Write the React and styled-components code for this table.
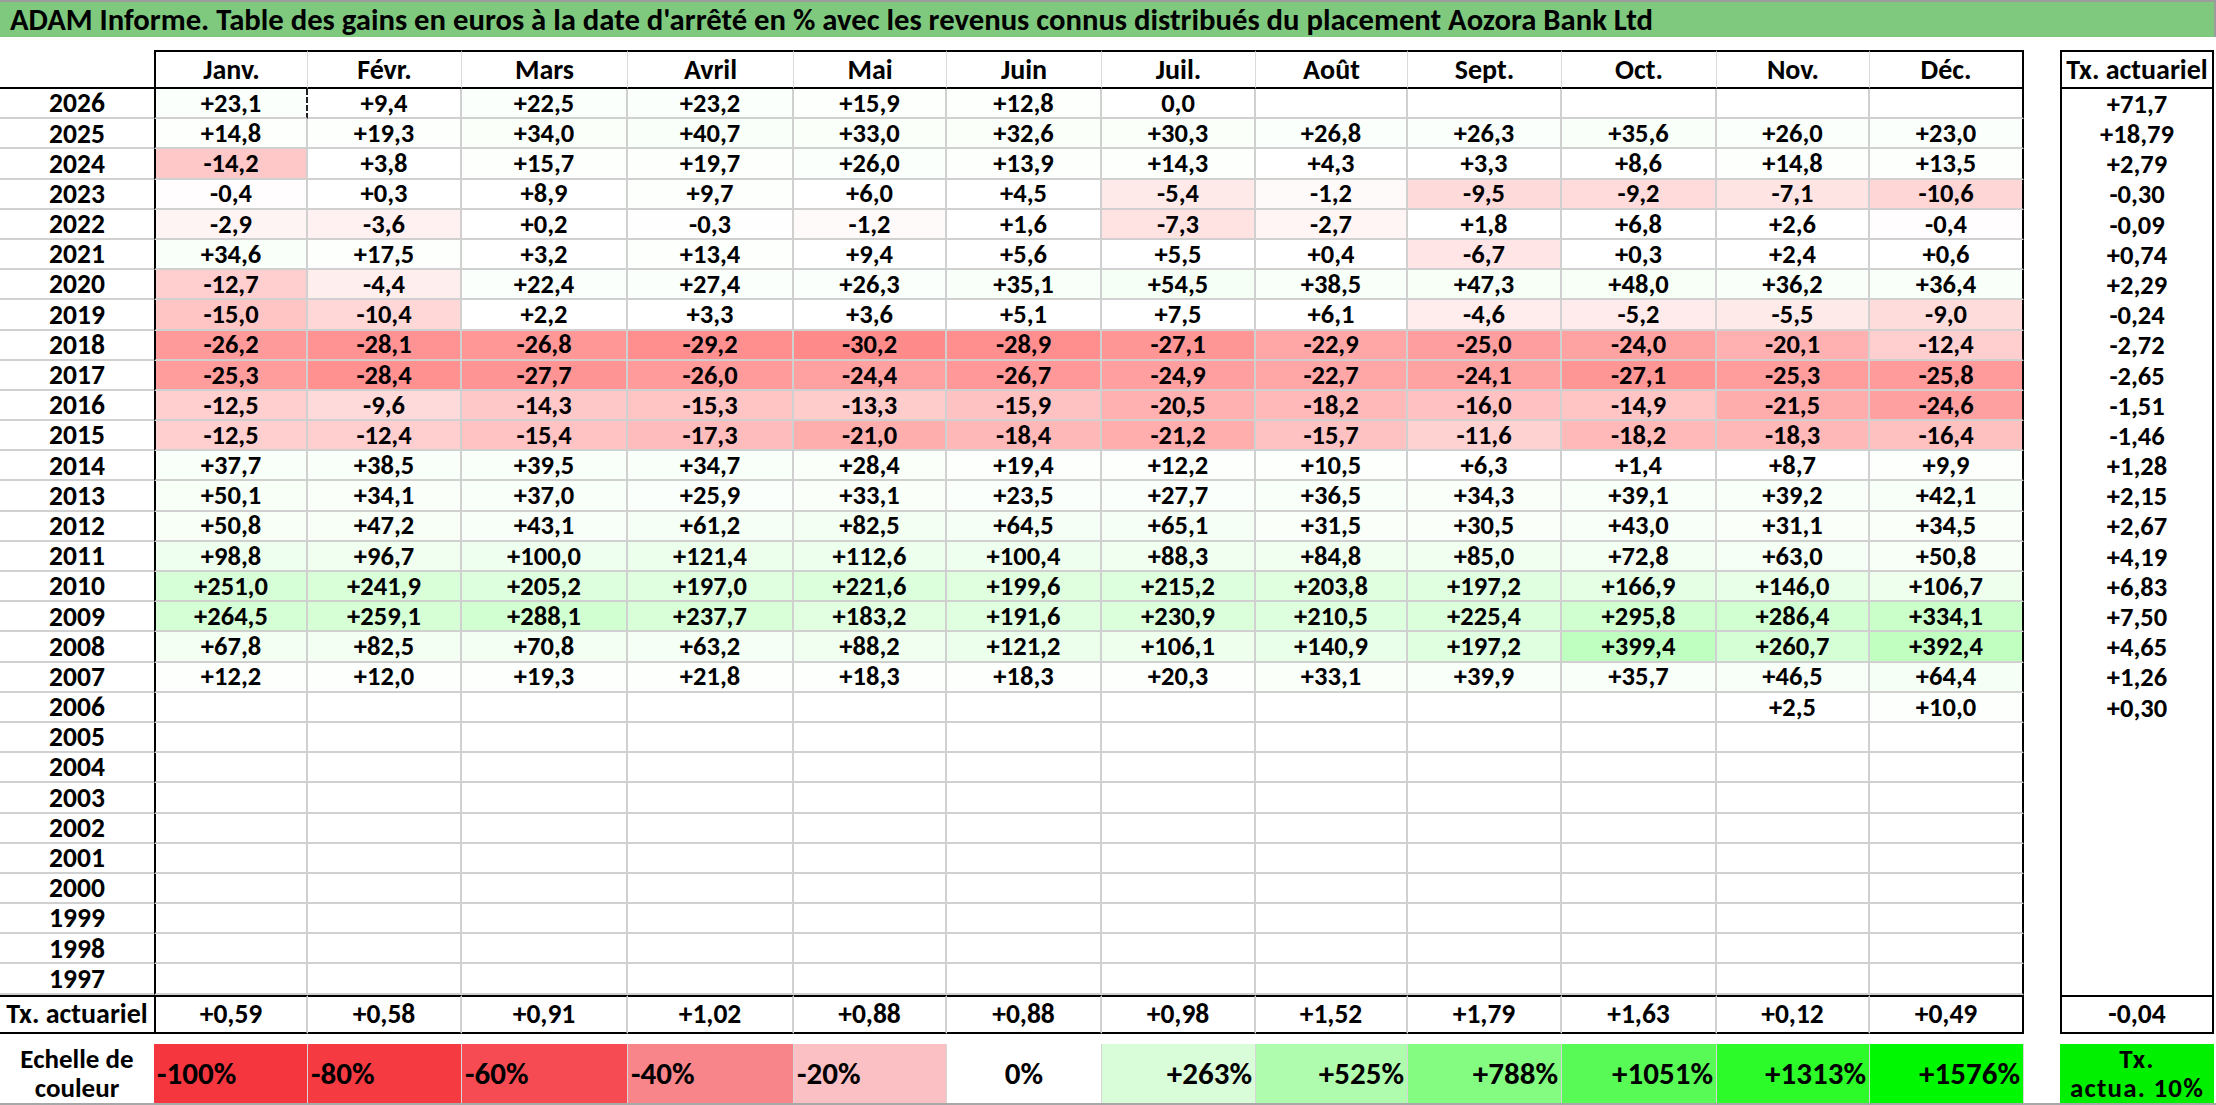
import React from "react";
import styled, { createGlobalStyle } from "styled-components";

const GlobalStyle = createGlobalStyle`
	html, body {
		margin: 0;
		padding: 0;
		background: #fff;
	}
	body {
		font-family: Carlito, Lato, "Liberation Sans", sans-serif;
		color: #000;
	}
`;

const COLUMNS = "154px 154px 154px 166px 166px 153px 155px 154px 152px 154px 155px 153px 154px 36px 154px 2px";
const GRID = "#d0d0d0";
const INK = "#000";

const MONTHS = ["Janv.", "Févr.", "Mars", "Avril", "Mai", "Juin", "Juil.", "Août", "Sept.", "Oct.", "Nov.", "Déc."];

const YEARS = [
	["2026", ["+23,1", "+9,4", "+22,5", "+23,2", "+15,9", "+12,8", "0,0", "", "", "", "", ""], "+71,7"],
	["2025", ["+14,8", "+19,3", "+34,0", "+40,7", "+33,0", "+32,6", "+30,3", "+26,8", "+26,3", "+35,6", "+26,0", "+23,0"], "+18,79"],
	["2024", ["-14,2", "+3,8", "+15,7", "+19,7", "+26,0", "+13,9", "+14,3", "+4,3", "+3,3", "+8,6", "+14,8", "+13,5"], "+2,79"],
	["2023", ["-0,4", "+0,3", "+8,9", "+9,7", "+6,0", "+4,5", "-5,4", "-1,2", "-9,5", "-9,2", "-7,1", "-10,6"], "-0,30"],
	["2022", ["-2,9", "-3,6", "+0,2", "-0,3", "-1,2", "+1,6", "-7,3", "-2,7", "+1,8", "+6,8", "+2,6", "-0,4"], "-0,09"],
	["2021", ["+34,6", "+17,5", "+3,2", "+13,4", "+9,4", "+5,6", "+5,5", "+0,4", "-6,7", "+0,3", "+2,4", "+0,6"], "+0,74"],
	["2020", ["-12,7", "-4,4", "+22,4", "+27,4", "+26,3", "+35,1", "+54,5", "+38,5", "+47,3", "+48,0", "+36,2", "+36,4"], "+2,29"],
	["2019", ["-15,0", "-10,4", "+2,2", "+3,3", "+3,6", "+5,1", "+7,5", "+6,1", "-4,6", "-5,2", "-5,5", "-9,0"], "-0,24"],
	["2018", ["-26,2", "-28,1", "-26,8", "-29,2", "-30,2", "-28,9", "-27,1", "-22,9", "-25,0", "-24,0", "-20,1", "-12,4"], "-2,72"],
	["2017", ["-25,3", "-28,4", "-27,7", "-26,0", "-24,4", "-26,7", "-24,9", "-22,7", "-24,1", "-27,1", "-25,3", "-25,8"], "-2,65"],
	["2016", ["-12,5", "-9,6", "-14,3", "-15,3", "-13,3", "-15,9", "-20,5", "-18,2", "-16,0", "-14,9", "-21,5", "-24,6"], "-1,51"],
	["2015", ["-12,5", "-12,4", "-15,4", "-17,3", "-21,0", "-18,4", "-21,2", "-15,7", "-11,6", "-18,2", "-18,3", "-16,4"], "-1,46"],
	["2014", ["+37,7", "+38,5", "+39,5", "+34,7", "+28,4", "+19,4", "+12,2", "+10,5", "+6,3", "+1,4", "+8,7", "+9,9"], "+1,28"],
	["2013", ["+50,1", "+34,1", "+37,0", "+25,9", "+33,1", "+23,5", "+27,7", "+36,5", "+34,3", "+39,1", "+39,2", "+42,1"], "+2,15"],
	["2012", ["+50,8", "+47,2", "+43,1", "+61,2", "+82,5", "+64,5", "+65,1", "+31,5", "+30,5", "+43,0", "+31,1", "+34,5"], "+2,67"],
	["2011", ["+98,8", "+96,7", "+100,0", "+121,4", "+112,6", "+100,4", "+88,3", "+84,8", "+85,0", "+72,8", "+63,0", "+50,8"], "+4,19"],
	["2010", ["+251,0", "+241,9", "+205,2", "+197,0", "+221,6", "+199,6", "+215,2", "+203,8", "+197,2", "+166,9", "+146,0", "+106,7"], "+6,83"],
	["2009", ["+264,5", "+259,1", "+288,1", "+237,7", "+183,2", "+191,6", "+230,9", "+210,5", "+225,4", "+295,8", "+286,4", "+334,1"], "+7,50"],
	["2008", ["+67,8", "+82,5", "+70,8", "+63,2", "+88,2", "+121,2", "+106,1", "+140,9", "+197,2", "+399,4", "+260,7", "+392,4"], "+4,65"],
	["2007", ["+12,2", "+12,0", "+19,3", "+21,8", "+18,3", "+18,3", "+20,3", "+33,1", "+39,9", "+35,7", "+46,5", "+64,4"], "+1,26"],
	["2006", ["", "", "", "", "", "", "", "", "", "", "+2,5", "+10,0"], "+0,30"],
	...["2005", "2004", "2003", "2002", "2001", "2000", "1999", "1998", "1997"].map(y => [y, Array(12).fill(""), ""])
];

const TOTALS = ["+0,59", "+0,58", "+0,91", "+1,02", "+0,88", "+0,88", "+0,98", "+1,52", "+1,79", "+1,63", "+0,12", "+0,49"];

const SCALE = [
	{ label: "-100%", bg: "#f5363f", align: "flex-start" },
	{ label: "-80%", bg: "#f63a42", align: "flex-start" },
	{ label: "-60%", bg: "#f64b52", align: "flex-start" },
	{ label: "-40%", bg: "#f8858a", align: "flex-start" },
	{ label: "-20%", bg: "#fbc0c3", align: "flex-start" },
	{ label: "0%", bg: "#ffffff", align: "center" },
	{ label: "+263%", bg: "#d9fdd8", align: "flex-end" },
	{ label: "+525%", bg: "#b0fcae", align: "flex-end" },
	{ label: "+788%", bg: "#84fc81", align: "flex-end" },
	{ label: "+1051%", bg: "#58fb55", align: "flex-end" },
	{ label: "+1313%", bg: "#2cfb29", align: "flex-end" },
	{ label: "+1576%", bg: "#00f900", align: "flex-end" }
];

// couleur de fond d'une cellule selon la valeur (blanc -> rouge / blanc -> vert)
const cellColor = text => {
	if (!text) return "#fff";
	const v = parseFloat(text.replace(",", "."));
	if (v < 0) {
		const t = Math.min(1, -v / 66);
		const c = Math.round(255 * (1 - t));
		return `rgb(255, ${c}, ${c})`;
	}
	const t = Math.min(1, v / 1600);
	const c = Math.round(255 * (1 - t));
	return `rgb(${c}, 255, ${c})`;
};

const Page = styled.div`
	width: 2216px;
	height: 1105px;
	overflow: hidden;
	display: flex;
	flex-direction: column;
`;

const TitleBar = styled.div`
	height: 37px;
	box-sizing: border-box;
	display: flex;
	align-items: center;
	padding: 2px 0 0 10px;
	background: #7fc97f;
	border-top: 2px solid #9c9c9c;
	border-right: 2px solid #9c9c9c;
	font-size: 30.7px;
	line-height: 1;
	font-weight: 700;
	white-space: nowrap;
`;

const TopGap = styled.div`
	height: 13px;
	flex: none;
`;

const Row = styled.div`
	display: grid;
	grid-template-columns: ${COLUMNS};
	height: ${p => p.$height};
	flex: none;
`;

const Cell = styled.div`
	box-sizing: border-box;
	display: flex;
	align-items: center;
	justify-content: center;
	font-size: 26.5px;
	line-height: 1;
	font-weight: 700;
	white-space: nowrap;
`;

const HeadLabel = styled(Cell)`
	border-bottom: 2px solid ${INK};
`;

const HeadCell = styled(Cell)`
	font-size: 28px;
	border-top: 2px solid ${INK};
	border-bottom: 2px solid ${INK};
	border-right: ${p => (p.$last ? `2px solid ${INK}` : "1px solid #dadada")};
	border-left: ${p => (p.$first ? `2px solid ${INK}` : "none")};
`;

const TxHead = styled(Cell)`
	font-size: 28px;
	border: 2px solid ${INK};
`;

const YearLabel = styled(Cell)`
	font-size: 27.5px;
	border-bottom: 2px solid ${GRID};
`;

const YearCell = styled(Cell)`
	background: ${p => p.$bg};
	border-bottom: 2px solid ${GRID};
	border-right: ${p => (p.$last ? `2px solid ${INK}` : p.$dashed ? `2px dashed #222` : `2px solid ${GRID}`)};
	border-left: ${p => (p.$first ? `2px solid ${INK}` : "none")};
`;

const TxBody = styled(Cell)`
	border-left: 2px solid ${INK};
	border-right: 2px solid ${INK};
`;

const TotalLabel = styled(Cell)`
	border-top: 2px solid ${INK};
	border-bottom: 2px solid ${INK};
	font-size: 28px;
`;

const TotalCell = styled(Cell)`
	font-size: 27.5px;
	border-top: 2px solid ${INK};
	border-bottom: 2px solid ${INK};
	border-right: ${p => (p.$last ? `2px solid ${INK}` : `2px solid ${GRID}`)};
	border-left: ${p => (p.$first ? `2px solid ${INK}` : "none")};
`;

const TxTotal = styled(Cell)`
	font-size: 27.5px;
	border: 2px solid ${INK};
`;

const Spacer = styled.div``;

const BottomGap = styled.div`
	height: 10px;
	flex: none;
`;

const LegendRow = styled(Row)`
	border-bottom: 2px solid #a8a8a8;
	box-sizing: border-box;
`;

const LegendLabel = styled(Cell)`
	flex-direction: column;
	line-height: 29px;
	font-size: 27px;
`;

const LegendCell = styled(Cell)`
	background: ${p => p.$bg};
	justify-content: ${p => p.$align};
	padding: 0 3px;
	font-size: 31px;
	border-right: 1px solid #d6d6d6;
`;

const LegendTx = styled(Cell)`
	flex-direction: column;
	line-height: 29px;
	background: #00f000;
	font-size: 27px;
	letter-spacing: 1.2px;
`;

export default function App() {
	return (
		<Page>
			<GlobalStyle/>
			<TitleBar>
				ADAM Informe. Table des gains en euros à la date d'arrêté en % avec les revenus connus distribués du placement Aozora Bank Ltd
			</TitleBar>
			<TopGap/>
			<Row $height="39px">
				<HeadLabel/>
				{MONTHS.map((m, i) => (
					<HeadCell key={m} $first={i === 0} $last={i === 11}>{m}</HeadCell>
				))}
				<Spacer/>
				<TxHead>Tx. actuariel</TxHead>
				<Spacer/>
			</Row>
			{YEARS.map(([year, values, tx]) => (
				<Row key={year} $height="30.2px">
					<YearLabel>{year}</YearLabel>
					{values.map((v, i) => (
						<YearCell
							key={i}
							$bg={cellColor(v)}
							$first={i === 0}
							$last={i === 11}
							$dashed={year === "2026" && i === 0}
						>
							{v}
						</YearCell>
					))}
					<Spacer/>
					<TxBody>{tx}</TxBody>
					<Spacer/>
				</Row>
			))}
			<Row $height="39px">
				<TotalLabel>Tx. actuariel</TotalLabel>
				{TOTALS.map((v, i) => (
					<TotalCell key={i} $first={i === 0} $last={i === 11}>{v}</TotalCell>
				))}
				<Spacer/>
				<TxTotal>-0,04</TxTotal>
				<Spacer/>
			</Row>
			<BottomGap/>
			<LegendRow $height="61px">
				<LegendLabel>
					<span>Echelle de</span>
					<span>couleur</span>
				</LegendLabel>
				{SCALE.map(s => (
					<LegendCell key={s.label} $bg={s.bg} $align={s.align}>{s.label}</LegendCell>
				))}
				<Spacer/>
				<LegendTx>
					<span>Tx.</span>
					<span>actua. 10%</span>
				</LegendTx>
				<Spacer/>
			</LegendRow>
		</Page>
	);
}
